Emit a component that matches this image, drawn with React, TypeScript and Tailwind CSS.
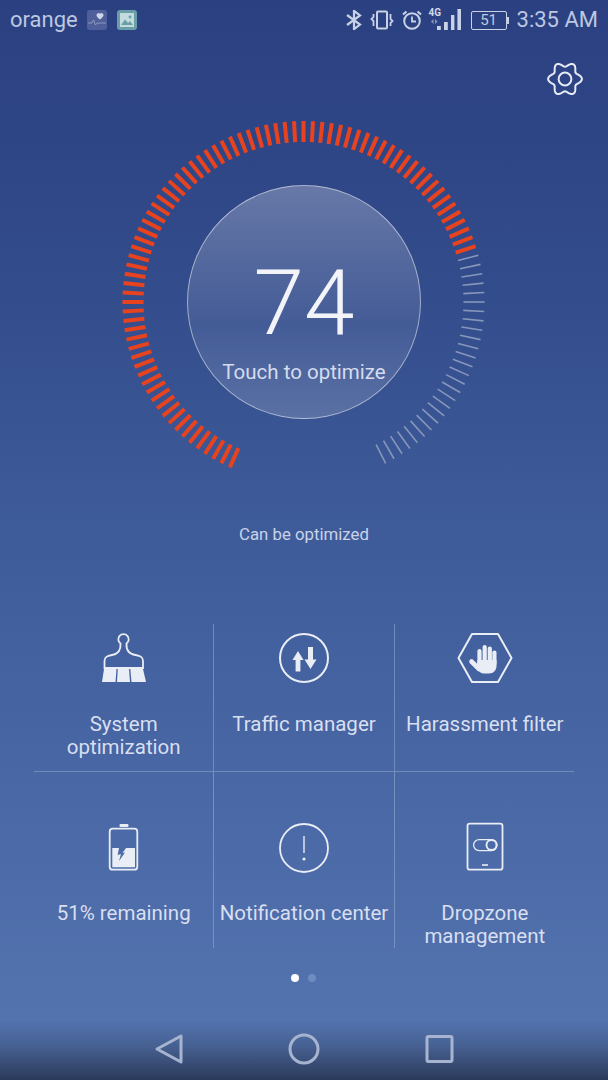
import type { ReactNode } from "react";

const ticks = Array.from({ length: 104 }, (_, i) => -156 + i * 3);

function Gauge() {
  return (
    <svg width="364" height="364" viewBox="-181.5 -182 364 364" className="block">
      {ticks.map((deg) => {
        const a = (deg * Math.PI) / 180;
        const red = deg <= 72;
        return (
          <line
            key={deg}
            x1={Math.sin(a) * 160}
            y1={-Math.cos(a) * 160}
            x2={Math.sin(a) * 181}
            y2={-Math.cos(a) * 181}
            stroke={red ? "#e8431f" : "#8796bb"}
            strokeWidth={red ? 4 : 1.6}
          />
        );
      })}
    </svg>
  );
}

// six lobed gear outline
function gearPath() {
  const pts: string[] = [];
  for (let i = 0; i < 120; i++) {
    const t = (i / 120) * Math.PI * 2;
    const r = 14.6 + 2.3 * Math.cos(6 * t);
    pts.push(`${(18 + Math.cos(t) * r).toFixed(2)} ${(18 + Math.sin(t) * r).toFixed(2)}`);
  }
  return "M" + pts.join("L") + "Z";
}

function Icon({ children }: { children: ReactNode }) {
  return (
    <svg width="60" height="60" viewBox="0 0 60 60" fill="none" stroke="#e9edf6" className="block">
      {children}
    </svg>
  );
}

const BrushIcon = () => (
  <Icon>
    <path
      d="M26.5 15.5C27 22 24 26 18 27C13 28 10.5 29 10.5 33V40H49V33C49 29 46.5 28 41.5 27C35.5 26 32 22 32.5 15.5A5.2 5.2 0 1 0 26.5 15.5Z"
      strokeWidth="1.8"
    />
    <path d="M10 41H22.5L21.5 54H8Z M23.8 41H35L36 54H23Z M36.3 41H49L52 54H37.5Z" fill="#e9edf6" stroke="none" />
  </Icon>
);

const TrafficIcon = () => (
  <Icon>
    <circle cx="30" cy="30" r="24" strokeWidth="2" />
    <path d="M24 23L29.5 32H26.4V43.5H21.6V32H18.5Z M36.5 41L30.5 31.5H34V19H39V31.5H42.5Z" fill="#e9edf6" stroke="none" />
  </Icon>
);

const HandIcon = () => (
  <Icon>
    <path d="M17 6H43L56.5 30L43 54H17L3.5 30Z" strokeWidth="2" strokeLinejoin="round" />
    <g strokeWidth="4.2" strokeLinecap="round">
      <line x1="24.5" y1="23" x2="24.5" y2="36" />
      <line x1="29.7" y1="19" x2="29.7" y2="36" />
      <line x1="34.8" y1="20.5" x2="34.8" y2="36" />
      <line x1="39.4" y1="24.5" x2="39.4" y2="36" />
      <line x1="16.5" y1="33.5" x2="24" y2="41" strokeWidth="4.6" />
    </g>
    <path d="M22.4 32H41.5V38C41.5 42 38.5 45.5 34 45.5H29C26 45.5 24 43.5 22 41Z" fill="#e9edf6" stroke="none" />
  </Icon>
);

const BatteryIcon = () => (
  <Icon>
    <rect x="15.7" y="10.7" width="27.6" height="41" rx="3" strokeWidth="1.8" />
    <rect x="25.5" y="6" width="9" height="3" rx="1.2" fill="#e9edf6" stroke="none" />
    <path
      d="M18.3 30H25L23.6 37L27 36L25 43L31 34.5L28.5 35L32 30H41V49.2H18.3Z"
      fill="#e9edf6"
      stroke="none"
    />
  </Icon>
);

const AlertIcon = () => (
  <Icon>
    <circle cx="30" cy="30" r="24" strokeWidth="1.8" />
    <line x1="30" y1="18" x2="30" y2="35" strokeWidth="1.4" />
    <circle cx="30" cy="41" r="1.6" fill="#e9edf6" stroke="none" />
  </Icon>
);

const DropzoneIcon = () => (
  <Icon>
    <rect x="12.5" y="5.7" width="35" height="46" rx="2.2" strokeWidth="1.8" />
    <rect x="18.6" y="21.6" width="23.4" height="11" rx="5.5" strokeWidth="1.3" />
    <circle cx="36.5" cy="27" r="5" strokeWidth="1.9" />
    <line x1="27" y1="47" x2="33" y2="47" strokeWidth="1.6" />
  </Icon>
);

const rowOne = [
  { label: "System\noptimization", icon: <BrushIcon /> },
  { label: "Traffic manager", icon: <TrafficIcon /> },
  { label: "Harassment filter", icon: <HandIcon /> },
];

const rowTwo = [
  { label: "51% remaining", icon: <BatteryIcon /> },
  { label: "Notification center", icon: <AlertIcon /> },
  { label: "Dropzone\nmanagement", icon: <DropzoneIcon /> },
];

function StatusBar() {
  return (
    <div className="flex h-[40px] items-center pl-[10px] pr-[10px] text-[22px] text-[#bcc7e0]">
      <span className="leading-none">orange</span>
      <div className="ml-[9px] flex h-[20px] w-[20px] items-center justify-center rounded-[3px] bg-[#4f5f9a]">
        <svg width="18" height="18" viewBox="0 0 18 18" fill="none">
          <path d="M9 8.5C6 6 5.5 5 5.5 4A2 2 0 0 1 9 2.8A2 2 0 0 1 12.5 4C12.5 5 12 6 9 8.5Z" fill="#cdd5e8" transform="translate(3 0)" />
          <path d="M0 12H4L5.5 9L7.5 14L9 12H18" stroke="#98a6ca" strokeWidth="0.8" />
        </svg>
      </div>
      <div className="ml-[10px] flex h-[20px] w-[20px] items-center justify-center rounded-[3px] bg-[#6a9fa9]">
        <svg width="14" height="14" viewBox="0 0 14 14">
          <rect width="14" height="14" fill="#c3dade" />
          <path d="M1 12L5 6.5L8 10L10 8L13 12Z" fill="#6a9fa9" />
          <circle cx="10" cy="4" r="1.4" fill="#6a9fa9" />
        </svg>
      </div>
      <div className="ml-auto flex items-center">
        <svg width="16" height="20" viewBox="0 0 16 20" fill="none" stroke="#c8d1e5" strokeWidth="2.2">
          <path d="M1 5L14 14.5L8 19.2V0.8L14 5.5L1 15" />
        </svg>
        <svg width="24" height="20" viewBox="0 0 24 20" fill="none" stroke="#c8d1e5" className="ml-[8px]">
          <rect x="7" y="1.5" width="10" height="17" rx="1" strokeWidth="2" />
          <path d="M3.5 4V7L1.5 9L3.5 11V16M20.5 4V9L22.5 11L20.5 13V16" strokeWidth="1.8" />
        </svg>
        <svg width="22" height="22" viewBox="0 0 22 22" fill="none" stroke="#c8d1e5" className="ml-[7px]">
          <circle cx="11" cy="12" r="7.8" strokeWidth="2" />
          <path d="M11 7.5V12.5H15" strokeWidth="1.8" />
          <path d="M2 5.5L5.5 2.5M20 5.5L16.5 2.5" strokeWidth="2.2" />
        </svg>
        <div className="relative ml-[6px] h-[24px] w-[32px]">
          <span className="absolute left-0 top-[-3px] text-[10px] font-bold text-[#d2d9ea]">4G</span>
          <svg width="32" height="24" viewBox="0 0 32 24" fill="#c8d1e5" className="block">
            <rect x="8" y="18" width="3.8" height="4" />
            <rect x="15" y="14" width="3.8" height="8" />
            <rect x="22" y="7" width="3.4" height="15" />
            <rect x="28.4" y="1" width="3.6" height="21" />
            <path d="M4.5 11L2 13.5L4.5 16Z M6 11L8.5 13.5L6 16Z" fill="#8a98bd" />
          </svg>
        </div>
        <div className="ml-[10px] flex items-center">
          <div className="flex h-[19px] w-[36px] items-center justify-center rounded-[2px] border-[1.5px] border-[#c8d1e5] text-[15px] leading-none">
            51
          </div>
          <div className="h-[7px] w-[2px] bg-[#c8d1e5]" />
        </div>
        <span className="ml-[8px] leading-none">3:35 AM</span>
      </div>
    </div>
  );
}

export default function App() {
  return (
    <div className="flex h-[1080px] w-[608px] flex-col overflow-hidden bg-[linear-gradient(180deg,#2b4080_0%,#324b8b_25%,#3f5c9a_50%,#4867a4_72%,#5676b2_100%)] [font-family:Roboto,sans-serif]">
      <StatusBar />

      <div className="flex h-[80px] justify-end pr-[25px] pt-[21px]">
        <svg width="36" height="36" viewBox="0 0 36 36" fill="none" stroke="#e6eaf4" strokeWidth="2" className="block">
          <path d={gearPath()} strokeLinejoin="round" />
          <circle cx="18" cy="18" r="6.4" />
        </svg>
      </div>

      <div className="relative mx-auto h-[364px] w-[364px]">
        <Gauge />
        <div className="absolute left-[65px] top-[65px] flex h-[234px] w-[234px] flex-col items-center rounded-full border border-white/50 bg-[linear-gradient(180deg,rgba(255,255,255,0.27)_0%,rgba(255,255,255,0.08)_60%,rgba(255,255,255,0.17)_100%)]">
          <span className="mt-[62px] text-[91px] font-light leading-[110px] text-[#f2f4f9]">74</span>
          <span className="mt-[2px] text-[20.5px] leading-[24px] text-[#d4dcee]">Touch to optimize</span>
        </div>
      </div>

      <p className="mt-[40px] text-center text-[16.8px] leading-[20px] text-[#c9d3e8]">Can be optimized</p>

      <div className="ml-[34px] mt-[80px] w-[541px] text-[#d8dff0]">
        <div className="grid h-[147px] grid-cols-3">
          {rowOne.map((cell, i) => (
            <div
              key={cell.label}
              className={`flex flex-col items-center pt-[4px] ${i < 2 ? "border-r border-[#6f8abb]" : ""}`}
            >
              {cell.icon}
              <span className="mt-[25px] whitespace-pre-line text-center text-[20.5px] leading-[23px]">{cell.label}</span>
            </div>
          ))}
        </div>
        <div className="mr-px h-px bg-[#6f8abb]" />
        <div className="grid h-[153px] grid-cols-3">
          {rowTwo.map((cell, i) => (
            <div
              key={cell.label}
              className={`flex flex-col items-center pt-[46px] ${i < 2 ? "border-r border-[#7690bf]" : ""}`}
            >
              {cell.icon}
              <span className="mt-[24px] whitespace-pre-line text-center text-[20.5px] leading-[23px]">{cell.label}</span>
            </div>
          ))}
        </div>
      </div>

      <div className="mt-[49px] flex justify-center gap-[9px] pr-px">
        <span className="h-[8px] w-[8px] rounded-full bg-white" />
        <span className="h-[8px] w-[8px] rounded-full bg-[#6f8cc0]" />
      </div>

      <nav className="mt-auto flex h-[60px] items-start justify-center gap-[103px] bg-[linear-gradient(180deg,rgba(42,56,85,0)_0%,rgba(42,56,85,0.35)_45%,#2b3a5a_100%)] pt-[13px]">
        <svg width="32" height="32" viewBox="0 0 32 32" fill="none" stroke="#a6b4d0" strokeWidth="3" strokeLinejoin="round">
          <path d="M4 16L28 3V29Z" />
        </svg>
        <svg width="32" height="32" viewBox="0 0 32 32" fill="none" stroke="#a6b4d0" strokeWidth="3">
          <circle cx="16" cy="16" r="14" />
        </svg>
        <svg width="32" height="32" viewBox="0 0 32 32" fill="none" stroke="#a6b4d0" strokeWidth="3" strokeLinejoin="round">
          <rect x="4" y="3.5" width="25" height="25" rx="1.5" />
        </svg>
      </nav>
    </div>
  );
}
